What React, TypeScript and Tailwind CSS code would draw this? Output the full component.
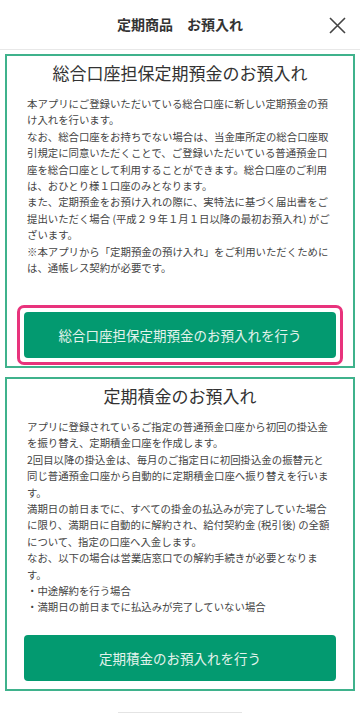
import React from 'react';

const jp = { fontFamily: '"Noto Sans CJK JP", "Noto Sans", sans-serif' };

type Product = {
  title: string;
  body: string[];
  action: string;
  focused?: boolean;
};

const products: Product[] = [
  {
    title: '総合口座担保定期預金のお預入れ',
    body: [
      '本アプリにご登録いただいている総合口座に新しい定期預金の預け入れを行います。',
      'なお、総合口座をお持ちでない場合は、当金庫所定の総合口座取引規定に同意いただくことで、ご登録いただいている普通預金口座を総合口座として利用することができます。総合口座のご利用は、おひとり様１口座のみとなります。',
      'また、定期預金をお預け入れの際に、実特法に基づく届出書をご提出いただく場合 (平成２９年１月１日以降の最初お預入れ) がございます。',
      '※本アプリから「定期預金の預け入れ」をご利用いただくためには、通帳レス契約が必要です。',
    ],
    action: '総合口座担保定期預金のお預入れを行う',
    focused: true,
  },
  {
    title: '定期積金のお預入れ',
    body: [
      'アプリに登録されているご指定の普通預金口座から初回の掛込金を振り替え、定期積金口座を作成します。',
      '2回目以降の掛込金は、毎月のご指定日に初回掛込金の振替元と同じ普通預金口座から自動的に定期積金口座へ振り替えを行います。',
      '満期日の前日までに、すべての掛金の払込みが完了していた場合に限り、満期日に自動的に解約され、給付契約金 (税引後) の全額について、指定の口座へ入金します。',
      'なお、以下の場合は営業店窓口での解約手続きが必要となります。',
      '・中途解約を行う場合',
      '・満期日の前日までに払込みが完了していない場合',
    ],
    action: '定期積金のお預入れを行う',
  },
];

function ProductCard({ product }: { product: Product }) {
  return (
    <section className="flex h-[314px] flex-col border-2 border-[#3fb28c] bg-white">
      <h2 className="pt-[4px] text-center text-[17px] leading-[26px] text-[#333]">{product.title}</h2>
      <div className="mt-[10px] w-[326px] self-start pl-[20px] text-[10.4px] leading-[16.4px] text-[#444]">
        {product.body.map((p, i) => (
          <p key={i}>{p}</p>
        ))}
      </div>
      <div className="mt-auto px-[10px] pb-[1px]">
        <div
          className={
            product.focused
              ? 'rounded-[7px] border-[3px] border-[#e8337c] p-[4px]'
              : 'rounded-[7px] border-[3px] border-transparent p-[4px]'
          }
        >
          <button className="flex h-[46px] w-full items-center justify-center rounded-[4px] bg-[#039a70] text-[13.5px] text-[#e3f3ec]">
            {product.action}
          </button>
        </div>
      </div>
    </section>
  );
}

export default function App() {
  return (
    <div lang="ja" className="min-h-[714px] w-[360px] bg-white" style={jp}>
      <header className="relative flex h-[50px] items-center justify-center border-b border-[#e8e8e8]">
        <h1 className="text-[14px] font-bold text-[#333]">定期商品　お預入れ</h1>
        <button className="absolute right-[14px] top-[17px] text-[#444]" aria-label="閉じる">
          <svg width="17" height="17" viewBox="0 0 17 17" fill="none" stroke="currentColor" strokeWidth="1.6">
            <path d="M1 1l15 15M16 1L1 16" />
          </svg>
        </button>
      </header>

      <main className="flex flex-col gap-[9px] px-[5px] pt-[4px]">
        {products.map((p) => (
          <ProductCard key={p.title} product={p} />
        ))}
        <div className="mx-auto mt-[12px] h-px w-[124px] bg-[#e4e4e4]" />
      </main>
    </div>
  );
}
